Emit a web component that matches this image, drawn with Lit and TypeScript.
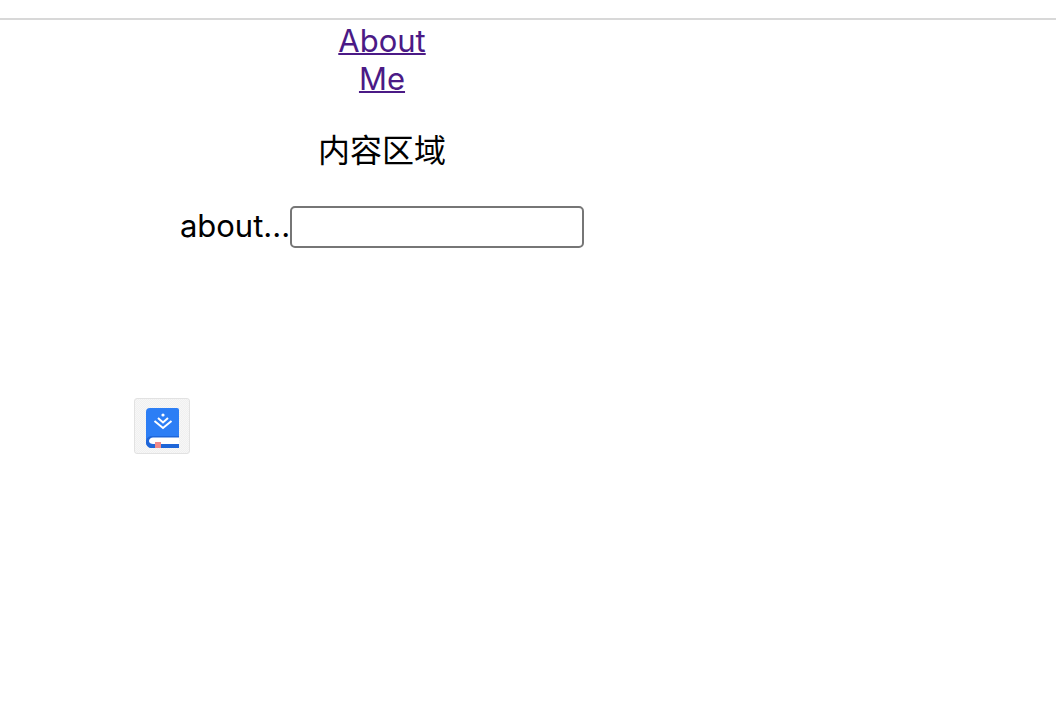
import {css, html, LitElement} from 'lit';
import {customElement} from 'lit/decorators.js';

@customElement('app-root')
export class AppRoot extends LitElement {
    static styles = css`
        :host {
            display: block;
            min-height: 708px;
            padding-top: 18px;
            box-sizing: border-box;
            background: #fff;
            color: #000;
            font-family: Inter, "Noto Sans CJK SC", sans-serif;
            font-size: 31px;
        }

        .rule {
            height: 2px;
            background: #d8d8d8;
        }

        .content {
            width: 764px;
            display: flex;
            flex-direction: column;
            align-items: center;
        }

        .nav {
            width: 100px;
            margin-top: 2px;
            text-align: center;
            line-height: 38px;
        }

        .nav a {
            color: #4b1a86;
            text-decoration-thickness: 2px;
        }

        .title {
            margin: 31px 0 0;
            font-size: 32px;
            line-height: 38px;
            font-family: "Noto Sans CJK SC", sans-serif;
            font-weight: 400;
        }

        .field {
            margin-top: 39px;
            display: flex;
            align-items: flex-start;
            line-height: 40px;
        }

        .field input {
            width: 294px;
            height: 42px;
            box-sizing: border-box;
            padding: 0 4px;
            border: 2px solid #767676;
            border-radius: 5px;
            background: #fff;
        }

        .badge {
            align-self: flex-start;
            margin: 150px 0 0 134px;
            width: 56px;
            height: 56px;
            box-sizing: border-box;
            border: 1px solid #e2e2e2;
            border-radius: 3px;
            background: repeating-conic-gradient(#f0f0f0 0 25%, #f7f7f7 0 50%) 0 0 / 2px 2px;
            display: flex;
            align-items: center;
            justify-content: center;
        }

        .badge svg {
            margin-top: 4px;
        }
    `;

    render() {
        return html`
            <div class="rule"></div>
            <div class="content">
                <div class="nav"><a href="#about">About Me</a></div>
                <p class="title">内容区域</p>
                <label class="field">about...<input type="text" /></label>
                <div class="badge">
                    <svg width="33" height="40" viewBox="0 0 33 40">
                        <path d="M0 34V4a4 4 0 0 1 4-4h27a2 2 0 0 1 2 2v38H6c-3 0-6-2-6-6z" fill="#2c7ef5" />
                        <path d="M0 34c0-4 3-6 6-6h27v12H6c-3 0-6-2-6-6z" fill="#1f66d8" />
                        <path d="M3 33c0-2 2-3.500 4-3.500h26V36H7c-2 0-4-1-4-3z" fill="#fff" />
                        <rect x="9" y="34" width="6" height="6" fill="#f08a8a" />
                        <circle cx="17" cy="7" r="1.600" fill="#fff" />
                        <path d="M12 10l5 4.500 5-4.500M8.500 13l8.500 7 8.500-7" fill="none" stroke="#fff" stroke-width="2" />
                    </svg>
                </div>
            </div>
        `;
    }
}
